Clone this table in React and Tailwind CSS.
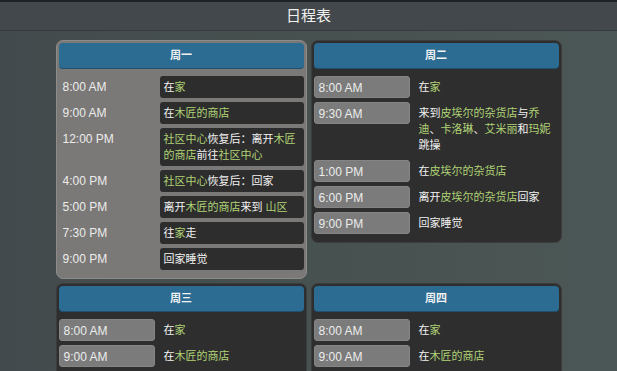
import React from "react";

const G = (t) => ({ t, g: true });

const days = [
  {
    label: "周一",
    active: true,
    rows: [
      ["8:00 AM", ["在", G("家")]],
      ["9:00 AM", ["在", G("木匠的商店")]],
      ["12:00 PM", [G("社区中心"), "恢复后：离开", G("木匠的商店"), "前往", G("社区中心")]],
      ["4:00 PM", [G("社区中心"), "恢复后：回家"]],
      ["5:00 PM", ["离开", G("木匠的商店"), "来到 ", G("山区")]],
      ["7:30 PM", ["往", G("家"), "走"]],
      ["9:00 PM", ["回家睡觉"]],
    ],
  },
  {
    label: "周二",
    rows: [
      ["8:00 AM", ["在", G("家")]],
      [
        "9:30 AM",
        ["来到", G("皮埃尔的杂货店"), "与", G("乔迪"), "、", G("卡洛琳"), "、", G("艾米丽"), "和", G("玛妮"), "跳操"],
      ],
      ["1:00 PM", ["在", G("皮埃尔的杂货店")]],
      ["6:00 PM", ["离开", G("皮埃尔的杂货店"), "回家"]],
      ["9:00 PM", ["回家睡觉"]],
    ],
  },
  {
    label: "周三",
    rows: [
      ["8:00 AM", ["在", G("家")]],
      ["9:00 AM", ["在", G("木匠的商店")]],
      ["12:00 PM", ["离开", G("木匠的商店"), "前往", G("鹈鹕镇")]],
      ["6:00 PM", ["回", G("家")]],
      ["9:00 PM", ["回家睡觉"]],
    ],
  },
  {
    label: "周四",
    rows: [
      ["8:00 AM", ["在", G("家")]],
      ["9:00 AM", ["在", G("木匠的商店")]],
      ["12:00 PM", ["离开", G("木匠的商店"), "前往", G("山区")]],
      ["6:00 PM", ["回", G("家")]],
      ["9:00 PM", ["回家睡觉"]],
    ],
  },
];

function EventText({ parts }) {
  return parts.map((p, i) =>
    typeof p === "string" ? (
      <span key={i}>{p}</span>
    ) : (
      <span key={i} className="text-[#b0d376]">
        {p.t}
      </span>
    )
  );
}

function DayCard({ label, rows, active }) {
  return (
    <div
      className={`rounded-[7px] border p-[2px] pb-[8px] ${
        active ? "bg-[#7b7977] border-[#8e8c8a]" : "bg-[#2e2e2e] border-[#3c3c3c]"
      }`}
    >
      <div className="h-[26px] flex items-center justify-center rounded-[4px] bg-[#2c6b92] border-b border-[#214f6c] text-[11px] font-bold text-[#f2f2f2]">
        {label}
      </div>
      <div className="mt-[7px] flex flex-col gap-[4px]">
        {rows.map(([time, parts]) => (
          <div key={time} className="grid grid-cols-[96px_1fr] gap-x-[5px] items-start">
            <div
              className={`h-[22px] pl-[4px] text-[12px] leading-[22px] text-[#ececec] ${
                active ? "" : "bg-[#7b7b7b] rounded-[3px] border border-[#858585] leading-[20px]"
              }`}
            >
              {time}
            </div>
            <div
              className={`min-h-[22px] px-[4px] py-[3px] text-[11px] leading-[16px] text-[#f2f2f2] ${
                active ? "bg-[#2d2d2d] rounded-[3px]" : ""
              }`}
            >
              <EventText parts={parts} />
            </div>
          </div>
        ))}
      </div>
    </div>
  );
}

export default function App() {
  return (
    <div
      className="h-[371px] overflow-hidden bg-gradient-to-r from-[#434a4d] via-[#47514f] to-[#4b5756]"
      style={{ fontFamily: '"Liberation Sans", "Noto Sans CJK SC", sans-serif' }}
    >
      <div className="h-[2px] bg-[#1e2225]" />
      <header className="h-[29px] flex items-center justify-center bg-[#42484b] border-b border-[#353b3e] text-[15px] text-[#f0f0f0]">
        日程表
      </header>
      <main className="pt-[9px] flex justify-center">
        <div className="grid grid-cols-[251px_251px] gap-[4px] items-start">
          {days.map((d) => (
            <DayCard key={d.label} {...d} />
          ))}
        </div>
      </main>
    </div>
  );
}
